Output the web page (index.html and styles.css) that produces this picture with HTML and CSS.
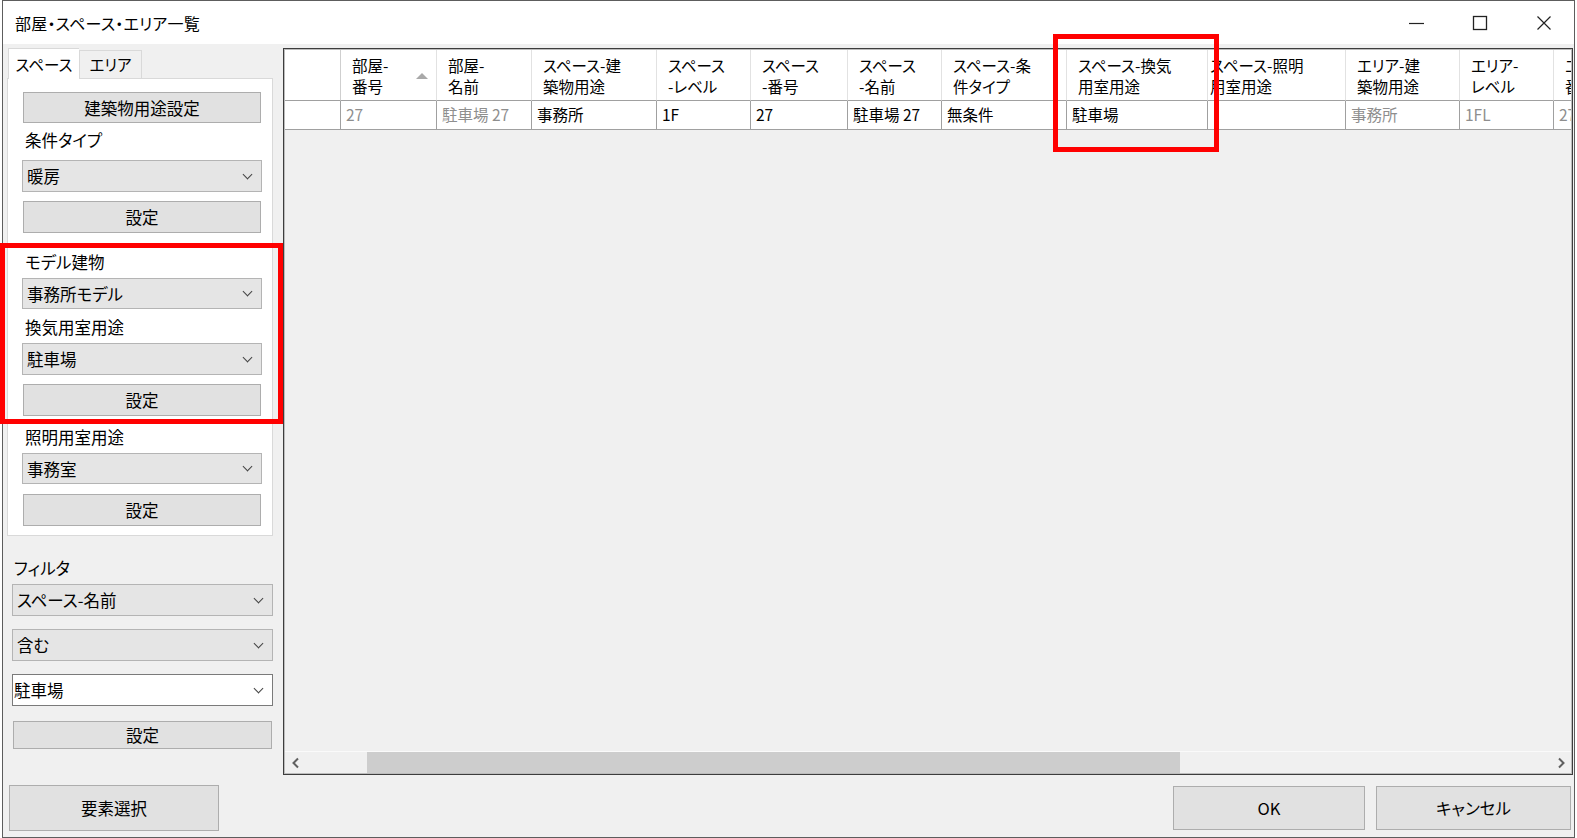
FILE: index.html
```html
<!DOCTYPE html>
<html lang="ja">
<head>
  <meta charset="UTF-8">
  <title>部屋・スペース・エリア一覧</title>
  <link rel="stylesheet" href="styles.css">
</head>
<body>

  <div class="window">

    <div class="titlebar">
      <span class="title">部屋・スペース・エリア一覧</span>
      <div class="caption">
        <span class="cap-btn">
          <svg width="16" height="16" viewBox="0 0 16 16"><path d="M1 8.5h15" stroke="#222" stroke-width="1.2" fill="none"/></svg>
        </span>
        <span class="cap-btn">
          <svg width="16" height="16" viewBox="0 0 16 16"><rect x="1.5" y="1.5" width="13" height="13" stroke="#222" stroke-width="1.3" fill="none"/></svg>
        </span>
        <span class="cap-btn cap-close">
          <svg width="16" height="16" viewBox="0 0 16 16"><path d="M1.5 1.5l13 13M14.5 1.5l-13 13" stroke="#222" stroke-width="1.2" fill="none"/></svg>
        </span>
      </div>
    </div>

    <div class="content">

      <!-- left side: tabs + filter -->
      <div class="side">
        <div class="tabs">
          <span class="tab active">スペース</span>
          <span class="tab">エリア</span>
        </div>

        <div class="tab-page">
          <button class="btn first mt-13">建築物用途設定</button>
          <div class="label mt-7">条件タイプ</div>
          <div class="combo mt-10"><span>暖房</span><i class="chev"></i></div>
          <button class="btn mt-9">設定</button>

          <div class="label mt-19">モデル建物</div>
          <div class="combo short mt-6"><span>事務所モデル</span><i class="chev"></i></div>
          <div class="label mt-8">換気用室用途</div>
          <div class="combo mt-6"><span>駐車場</span><i class="chev"></i></div>
          <button class="btn mt-9">設定</button>

          <div class="label mt-11">照明用室用途</div>
          <div class="combo short mt-6"><span>事務室</span><i class="chev"></i></div>
          <button class="btn mt-10">設定</button>
        </div>

        <div class="filter">
          <div class="label mt-22">フィルタ</div>
          <div class="combo mt-6"><span>スペース-名前</span><i class="chev"></i></div>
          <div class="combo mt-13"><span>含む</span><i class="chev"></i></div>
          <div class="combo edit mt-13"><span>駐車場</span><i class="chev"></i></div>
          <button class="btn thin mt-15">設定</button>
        </div>
      </div>

      <!-- data grid -->
      <div class="grid">
        <div class="grid-view">
          <div class="row head">
            <div class="cell"></div>
            <div class="cell sorted"><span>部屋-<br>番号</span><i class="sort-up"></i></div>
            <div class="cell">部屋-<br>名前</div>
            <div class="cell">スペース-建<br>築物用途</div>
            <div class="cell">スペース<br>-レベル</div>
            <div class="cell">スペース<br>-番号</div>
            <div class="cell">スペース<br>-名前</div>
            <div class="cell">スペース-条<br>件タイプ</div>
            <div class="cell">スペース-換気<br>用室用途</div>
            <div class="cell tight">スペース-照明<br>用室用途</div>
            <div class="cell">エリア-建<br>築物用途</div>
            <div class="cell">エリア-<br>レベル</div>
            <div class="cell">エリア-<br>番号</div>
          </div>
          <div class="row data">
            <div class="cell"></div>
            <div class="cell ro">27</div>
            <div class="cell ro">駐車場 27</div>
            <div class="cell">事務所</div>
            <div class="cell">1F</div>
            <div class="cell">27</div>
            <div class="cell">駐車場 27</div>
            <div class="cell">無条件</div>
            <div class="cell">駐車場</div>
            <div class="cell"></div>
            <div class="cell ro">事務所</div>
            <div class="cell ro">1FL</div>
            <div class="cell ro">27</div>
          </div>
          <div class="grid-empty"></div>
          <div class="hscroll">
            <span class="arrow">
              <svg width="10" height="12" viewBox="0 0 10 12"><path d="M7 1.5L2.5 6 7 10.5" stroke="#606060" stroke-width="2" fill="none"/></svg>
            </span>
            <div class="track"><div class="thumb"></div></div>
            <span class="arrow">
              <svg width="10" height="12" viewBox="0 0 10 12"><path d="M3 1.5L7.5 6 3 10.5" stroke="#606060" stroke-width="2" fill="none"/></svg>
            </span>
          </div>
        </div>
      </div>
    </div>

    <div class="footer">
      <button class="btn big select">要素選択</button>
      <div class="footer-right">
        <button class="btn big ok">OK</button>
        <button class="btn big cancel">キャンセル</button>
      </div>
    </div>

    <!-- red annotation frames -->
    <div class="mark mark-col"></div>
    <div class="mark mark-side"></div>
  </div>

</body>
</html>
```

FILE: styles.css
```css
* {
  margin: 0;
  padding: 0;
  box-sizing: border-box;
}

body {
  background: #ffffff;
  font-family: "Noto Sans CJK JP", "Noto Sans", sans-serif;
  font-size: 16.5px;
  font-feature-settings: "palt";
  color: #000;
  overflow: hidden;
}

.window {
  position: relative;
  margin-left: 2px;
  width: 1573px;
  height: 838px;
  border: 1px solid #5d5d5d;
  background: #f0f0f0;
  display: flex;
  flex-direction: column;
}

/* title bar */
.titlebar {
  height: 43px;
  background: #fff;
  display: flex;
  align-items: center;
  justify-content: space-between;
}

.title {
  padding-left: 12px;
  font-size: 16px;
  letter-spacing: 0.2px;
}

.caption {
  display: flex;
  height: 100%;
  margin-right: -2px;
}

.cap-btn {
  width: 64px;
  height: 100%;
  display: flex;
  align-items: center;
  justify-content: center;
}

/* main area */
.content {
  display: flex;
  height: 731px;
  padding-top: 4px;
}

.side {
  width: 270px;
  padding-left: 4px;
  flex: none;
}

.tabs {
  display: flex;
  height: 30px;
  align-items: flex-end;
  padding-left: 1px;
}

.tab {
  width: 63px;
  height: 28px;
  border: 1px solid #d9d9d9;
  border-bottom: none;
  background: #f0f0f0;
  line-height: 26px;
  font-size: 15.5px;
  text-align: center;
}

.tab.active {
  position: relative;
  width: 71px;
  height: 31px;
  margin-bottom: -1px;
  background: #fff;
  line-height: 30px;
  z-index: 1;
  border-right: none;
}

.tab-page {
  height: 458px;
  background: #fff;
  border: 1px solid #d9d9d9;
  padding: 0 10px 9px 14px;
  display: flex;
  flex-direction: column;
}

.label {
  height: 20px;
  line-height: 20px;
  padding-left: 3px;
}

.btn {
  height: 32px;
  margin-left: 1px;
  margin-right: 1px;
  background: #e1e1e1;
  border: 1px solid #adadad;
  font-family: inherit;
  font-size: 16.5px;
  font-feature-settings: "palt";
  color: #000;
}

.btn.first {
  height: 31px;
}

.btn.thin {
  height: 28px;
}

.combo {
  height: 32px;
  background: #e5e5e5;
  border: 1px solid #b4b4b4;
  display: flex;
  align-items: center;
  justify-content: space-between;
  padding: 0 8px 0 4px;
}

.combo.short {
  height: 31px;
}

.combo.edit {
  background: #fff;
  border-color: #7a7a7a;
  padding-left: 1px;
}

.chev {
  width: 7px;
  height: 7px;
  border-right: 1.3px solid #444;
  border-bottom: 1.3px solid #444;
  transform: rotate(45deg);
  margin-top: -4px;
  margin-right: 2px;
}

.filter {
  display: flex;
  flex-direction: column;
  padding-left: 5px;
  width: 266px;
}

.filter .label {
  padding-left: 2px;
}

.mt-6 { margin-top: 6px; }
.mt-7 { margin-top: 7px; }
.mt-8 { margin-top: 8px; }
.mt-9 { margin-top: 9px; }
.mt-10 { margin-top: 10px; }
.mt-11 { margin-top: 11px; }
.mt-13 { margin-top: 13px; }
.mt-15 { margin-top: 15px; }
.mt-19 { margin-top: 19px; }
.mt-22 { margin-top: 22px; }

/* grid */
.grid {
  flex: none;
  width: 1290px;
  margin-left: 10px;
  border: 1px solid #3d3d3d;
  display: flex;
}

.grid-view {
  flex: 1;
  border: 1px solid #bcbcbc;
  display: flex;
  flex-direction: column;
  overflow: hidden;
  background: #f0f0f0;
}

.row {
  display: grid;
  grid-template-columns: 56px 96px 95px 125px 94px 97px 94px 125px 141px 138px 114px 94px 100px;
  width: 1409px;
  background: #fff;
}

.row.head {
  height: 51px;
}

.row.head .cell {
  border-right: 1px solid #e2e2e2;
  border-bottom: 1px solid #a0a0a0;
  padding-left: 11px;
  display: flex;
  align-items: center;
  line-height: 21px;
  font-size: 15.5px;
  padding-top: 1px;
}

.row.head .cell:first-child {
  border-right-color: #cfcfcf;
}

.row.head .cell.tight {
  padding-left: 2px;
}

.row.head .cell.sorted {
  justify-content: space-between;
  padding-right: 8px;
}

.sort-up {
  width: 0;
  height: 0;
  border-left: 6px solid transparent;
  border-right: 6px solid transparent;
  border-bottom: 6px solid #a9a9a9;
}

.row.data {
  height: 29px;
}

.row.data .cell {
  border-right: 1px solid #a0a0a0;
  border-bottom: 1px solid #a0a0a0;
  padding-left: 5px;
  line-height: 27px;
  font-size: 15.5px;
  white-space: nowrap;
}

.row.data .cell.ro {
  color: #8e8e8e;
}

.grid-empty {
  flex: 1;
}

.hscroll {
  height: 22px;
  border-top: 1px solid #fafafa;
  display: flex;
  align-items: center;
  background: #f0f0f0;
}

.arrow {
  width: 21px;
  height: 100%;
  display: flex;
  align-items: center;
  justify-content: center;
}

.track {
  flex: 1;
  height: 100%;
  padding-left: 61px;
}

.thumb {
  width: 813px;
  height: 100%;
  background: #cdcdcd;
}

/* footer */
.footer {
  flex: 1;
  display: flex;
  justify-content: space-between;
  align-items: flex-start;
  padding: 10px 3px 0 6px;
}

.footer-right {
  display: flex;
  gap: 11px;
  padding-top: 1px;
}

.btn.big {
  height: 44px;
  margin: 0;
}

.btn.select {
  width: 210px;
  height: 46px;
}

.btn.ok {
  width: 192px;
}

.btn.cancel {
  width: 195px;
}

/* red annotation frames */
.mark {
  position: absolute;
  border: 5px solid #ff0000;
  z-index: 5;
}

.mark-col {
  left: 1050px;
  top: 33px;
  width: 166px;
  height: 118px;
}

.mark-side {
  left: -3px;
  top: 242px;
  width: 283px;
  height: 181px;
}
```
